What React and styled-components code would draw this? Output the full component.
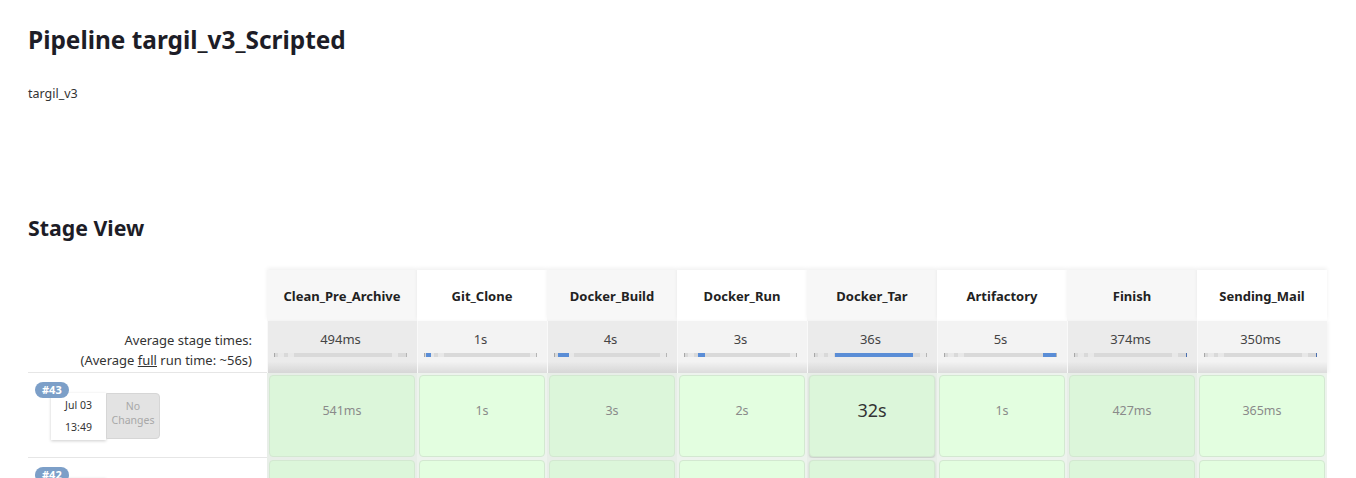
import React from 'react';
import styled, { createGlobalStyle } from 'styled-components';

const stages = [
  { name: 'Clean_Pre_Archive', avg: '494ms', bar: null },
  { name: 'Git_Clone', avg: '1s', bar: [1, 4] },
  { name: 'Docker_Build', avg: '4s', bar: [3, 10] },
  { name: 'Docker_Run', avg: '3s', bar: [12, 6] },
  { name: 'Docker_Tar', avg: '36s', bar: [18, 70] },
  { name: 'Artifactory', avg: '5s', bar: [88, 12] },
  { name: 'Finish', avg: '374ms', bar: null, endMark: true },
  { name: 'Sending_Mail', avg: '350ms', bar: null, endMark: true },
];

const runs = [
  {
    id: 43,
    date: 'Jul 03',
    time: '13:49',
    times: ['541ms', '1s', '3s', '2s', '32s', '1s', '427ms', '365ms'],
    longest: 4,
  },
  {
    id: 42,
    date: 'Jul 03',
    time: '13:40',
    times: ['512ms', '1s', '4s', '3s', '35s', '5s', '380ms', '352ms'],
    longest: 4,
  },
];

const GlobalStyle = createGlobalStyle`
  body {
    margin: 0;
    background: #fff;
    font-family: "Noto Sans", "Open Sans", sans-serif;
    color: #333;
  }
`;

const App = () => {
  return (
    <Page>
      <GlobalStyle />
      <Title>Pipeline targil_v3_Scripted</Title>
      <Description>targil_v3</Description>
      <SectionTitle>Stage View</SectionTitle>

      <StageTable>
        <Corner />
        {stages.map((stage, i) => (
          <StageHeader key={stage.name} $alt={i % 2 === 0}>
            {stage.name}
          </StageHeader>
        ))}

        <AvgLabel>
          <div>Average stage times:</div>
          <div>
            (Average <u>full</u> run time: ~56s)
          </div>
        </AvgLabel>
        {stages.map((stage, i) => (
          <AvgCell key={stage.name} $alt={i % 2 === 0}>
            <AvgTime>{stage.avg}</AvgTime>
            <Track $endMark={stage.endMark}>
              <Tick />
              <Tick />
              <Spacer />
              <Tick />
              {stage.bar && (
                <Fill style={{ left: `${stage.bar[0]}%`, width: `${stage.bar[1]}%` }} />
              )}
            </Track>
          </AvgCell>
        ))}

        {runs.map((run) => (
          <React.Fragment key={run.id}>
            <RunLabel>
              <Badge>#{run.id}</Badge>
              <RunInfo>
                <DateBox>
                  <span>{run.date}</span>
                  <span>{run.time}</span>
                </DateBox>
                <ChangesBox>
                  No
                  <br />
                  Changes
                </ChangesBox>
              </RunInfo>
            </RunLabel>
            {run.times.map((t, i) => (
              <RunCell key={i} $alt={i % 2 === 0}>
                <StageBox $alt={i % 2 === 0} $longest={i === run.longest}>
                  {t}
                </StageBox>
              </RunCell>
            ))}
          </React.Fragment>
        ))}
      </StageTable>
    </Page>
  );
};

const Page = styled.div`
  padding: 25px 0 0 28px;
  height: 478px;
  box-sizing: border-box;
  overflow: hidden;
`;

const Title = styled.h1`
  margin: 0;
  font-size: 24.4px;
  line-height: 30px;
  font-weight: 700;
  color: #1d1d27;
`;

const Description = styled.div`
  margin-top: 31px;
  font-size: 12.5px;
  line-height: 16px;
  color: #333;
`;

const SectionTitle = styled.h2`
  margin: 113px 0 0;
  font-size: 21.3px;
  line-height: 26px;
  font-weight: 700;
  color: #1d1d27;
`;

const StageTable = styled.div`
  margin-top: 29px;
  display: grid;
  grid-template-columns: 239px 150px repeat(7, 130px);
  grid-template-rows: 51px 52px repeat(2, 85px);
`;

const Corner = styled.div``;

const StageHeader = styled.div`
  display: flex;
  align-items: center;
  justify-content: center;
  font-size: 13px;
  font-weight: 700;
  color: #222;
  background: ${(p) => (p.$alt ? '#f7f7f7' : '#fff')};
  box-shadow: 0 -2px 4px rgba(0, 0, 0, 0.06);
  &:last-of-type {
    box-shadow: 2px -2px 4px rgba(0, 0, 0, 0.08);
  }
`;

const AvgLabel = styled.div`
  display: flex;
  flex-direction: column;
  align-items: flex-end;
  justify-content: center;
  padding: 6px 15px 0 0;
  font-size: 13px;
  line-height: 20px;
  color: #333;
  border-bottom: 1px solid #e6e6e6;
`;

const AvgCell = styled.div`
  display: flex;
  flex-direction: column;
  align-items: stretch;
  padding: 8px 10px 0 6px;
  background: ${(p) =>
    p.$alt
      ? 'linear-gradient(#ebebeb 0, #ebebeb 78%, #d6d6d6 100%)'
      : 'linear-gradient(#f3f3f3 0, #f3f3f3 78%, #dcdcdc 100%)'};
  border-left: 1px solid #f9f9f9;
  box-shadow: 2px 0 3px rgba(0, 0, 0, 0.04);
`;

const AvgTime = styled.div`
  text-align: center;
  font-size: 13px;
  line-height: 20px;
  color: #444;
`;

const Track = styled.div`
  position: relative;
  margin-top: 4px;
  height: 4px;
  display: flex;
  gap: 4px;
  background: #d9d9d9;
  border-left: 1px solid #a8a8a8;
  border-right: 1px solid ${(p) => (p.$endMark ? '#4a6fb0' : '#b5b5b5')};
`;

const Tick = styled.span`
  width: 6px;
  height: 4px;
  background: #e8e8e8;
  &:first-child {
    margin-left: 3px;
  }
  &:last-of-type {
    margin-right: 8px;
  }
`;

const Spacer = styled.span`
  flex: 1;
`;

const Fill = styled.span`
  position: absolute;
  top: 0;
  height: 4px;
  background: #5a8dd6;
`;

const RunLabel = styled.div`
  border-bottom: 1px solid #e6e6e6;
  padding: 4px 0 0 7px;
`;

const Badge = styled.div`
  display: inline-block;
  padding: 0 7px;
  height: 16px;
  line-height: 16px;
  border-radius: 8px;
  background: #7c9fc8;
  color: #fff;
  font-size: 11px;
  font-weight: 700;
  position: relative;
  z-index: 1;
`;

const RunInfo = styled.div`
  display: flex;
  margin: -6px 0 0 16px;
`;

const DateBox = styled.div`
  width: 55px;
  height: 47px;
  display: flex;
  flex-direction: column;
  align-items: center;
  justify-content: center;
  gap: 10px;
  padding-bottom: 2px;
  box-sizing: border-box;
  background: #fff;
  box-shadow: 0 1px 3px rgba(0, 0, 0, 0.2);
  font-size: 10.5px;
  line-height: 12px;
  color: #333;
`;

const ChangesBox = styled.div`
  width: 54px;
  height: 46px;
  display: flex;
  align-items: center;
  justify-content: center;
  text-align: center;
  padding-bottom: 6px;
  background: #e3e3e3;
  border-radius: 0 4px 4px 0;
  border: 1px solid #d6d6d6;
  box-sizing: border-box;
  font-size: 10.5px;
  line-height: 14px;
  color: #a8a8a8;
`;

const RunCell = styled.div`
  padding: 2px 2px 1px;
  background: ${(p) => (p.$alt ? '#e8eee8' : '#edf3ed')};
  display: flex;
`;

const StageBox = styled.div`
  flex: 1;
  display: flex;
  align-items: center;
  justify-content: center;
  padding-bottom: 12px;
  border-radius: 4px;
  border: 1px solid #d3e8d1;
  background: ${(p) => (p.$alt ? '#dcf6da' : '#e3fee0')};
  font-size: ${(p) => (p.$longest ? '18px' : '12.5px')};
  color: ${(p) => (p.$longest ? '#333' : '#8a8a8a')};
  box-shadow: ${(p) => (p.$longest ? '0 1px 2px rgba(0,0,0,0.15)' : 'none')};
`;

export default App;
